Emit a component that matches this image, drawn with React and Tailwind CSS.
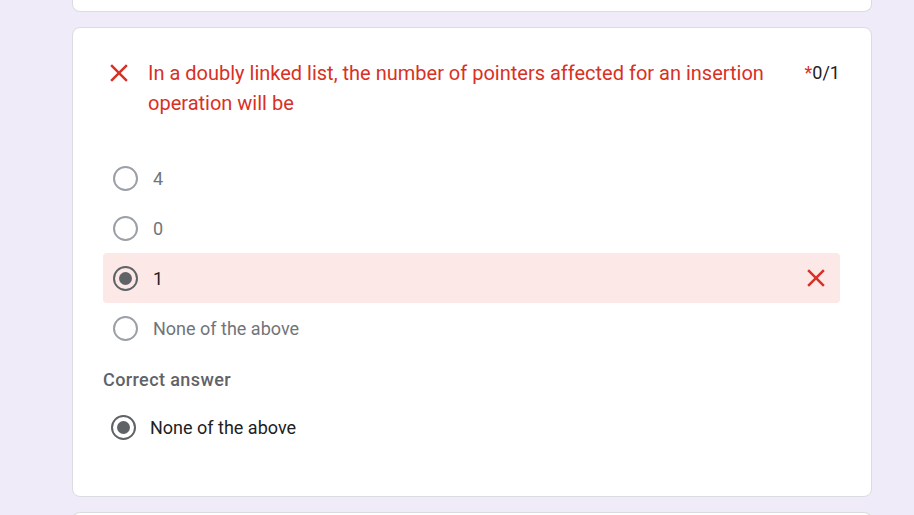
import { useState } from 'react'

const XMark = ({ className = '' }) => (
  <svg viewBox="0 0 24 24" className={className} fill="currentColor">
    <path d="M19 6.41L17.59 5 12 10.59 6.41 5 5 6.41 10.59 12 5 17.59 6.41 19 12 13.41 17.59 19 19 17.59 13.41 12z" />
  </svg>
)

function Radio({ checked }) {
  return (
    <span
      className={`w-[25px] h-[25px] rounded-full border-2 flex items-center justify-center shrink-0 ${
        checked ? 'border-[#5f6368]' : 'border-[#9aa0a6]'
      }`}
    >
      {checked && <span className="w-[13px] h-[13px] rounded-full bg-[#5f6368]" />}
    </span>
  )
}

const options = ['4', '0', '1', 'None of the above']

export default function App() {
  const [picked] = useState('1')

  return (
    <div className="min-h-screen bg-[#f0ebf8] font-['Roboto',sans-serif] overflow-hidden">
      <div className="ml-[72px] w-[800px] flex flex-col gap-[15px]">
        {/* tail of previous card */}
        <div className="h-[12px] bg-white border border-t-0 border-[#dadce0] rounded-b-lg" />

        <div className="bg-white border border-[#dadce0] rounded-lg pt-[30px] pb-[44px] pl-[30px] pr-[31px]">
          <div className="flex items-start">
            <XMark className="w-[30px] h-[30px] text-[#d93025] ml-[1px]" />
            <p className="ml-[14px] flex-1 text-[20px] leading-[30px] text-[#d93025] pr-[10px]">
              In a doubly linked list, the number of pointers affected for an insertion operation will be
            </p>
            <div className="text-[18px] leading-[30px] text-[#202124]">
              <span className="text-[#d93025]">*</span>0/1
            </div>
          </div>

          <div className="mt-[35px] flex flex-col">
            {options.map((opt) => {
              const wrong = opt === picked
              return (
                <div
                  key={opt}
                  className={`h-[50px] flex items-center pl-[10px] pr-[9px] rounded ${wrong ? 'bg-[#fce8e6]' : ''}`}
                >
                  <Radio checked={wrong} />
                  <span
                    className={`ml-[15px] flex-1 text-[18px] ${wrong ? 'text-[#202124]' : 'text-[#70757a]'}`}
                  >
                    {opt}
                  </span>
                  {wrong && <XMark className="w-[30px] h-[30px] text-[#d93025]" />}
                </div>
              )
            })}
          </div>

          <div className="mt-[15px] text-[18px] leading-[24px] font-medium tracking-[0.4px] text-[#5f6368]">
            Correct answer
          </div>

          <div className="mt-[10px] h-[50px] flex items-center pl-[8px]">
            <Radio checked />
            <span className="ml-[14px] text-[18px] text-[#202124]">None of the above</span>
          </div>
        </div>

        <div className="h-[20px] bg-white border border-b-0 border-[#dadce0] rounded-t-lg" />
      </div>
    </div>
  )
}
